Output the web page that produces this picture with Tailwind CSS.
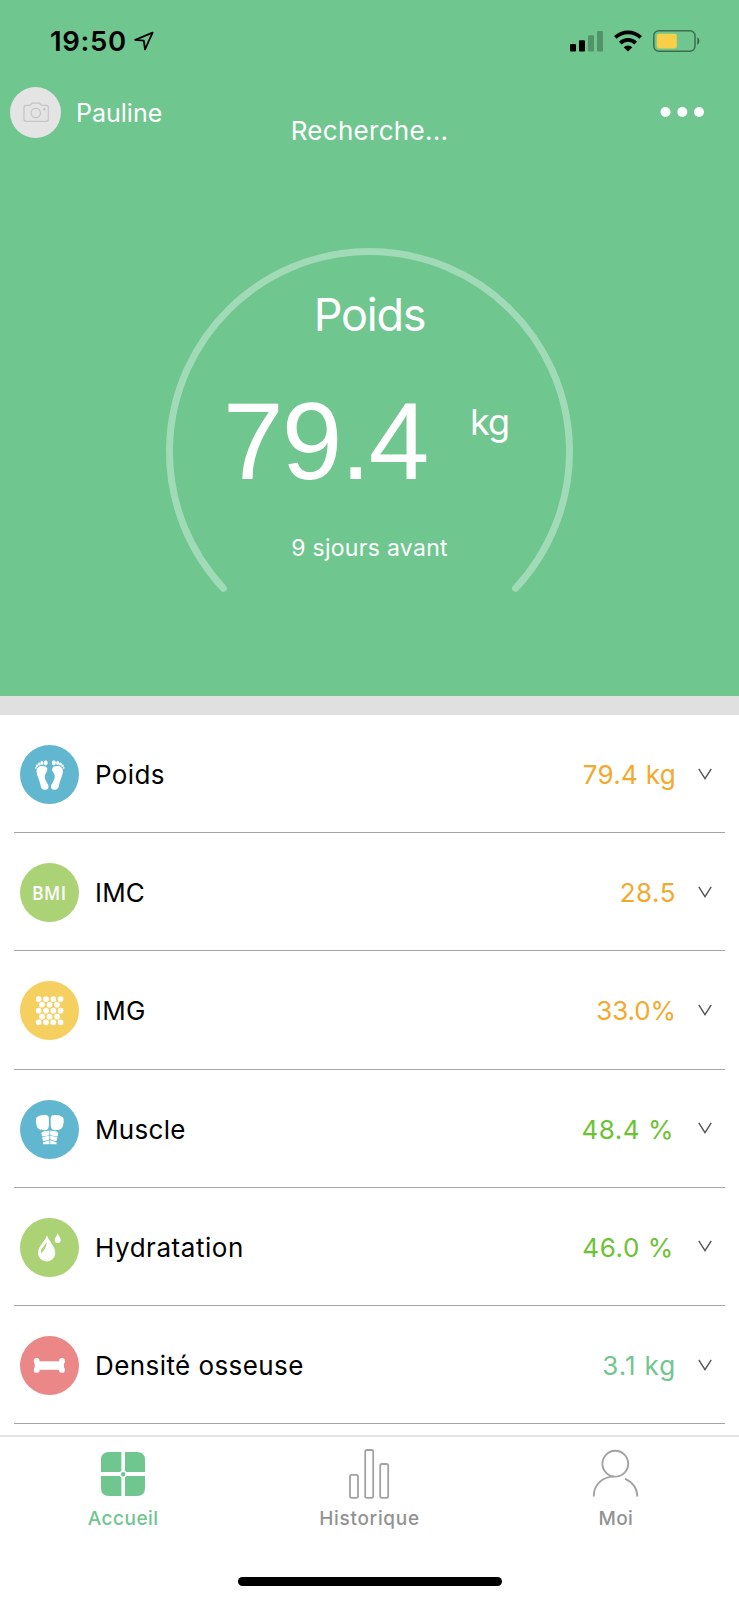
<!DOCTYPE html>
<html lang="fr">
<head>
<meta charset="utf-8">
<title>Accueil</title>
<script src="https://cdn.jsdelivr.net/npm/@tailwindcss/browser@4"></script>
</head>
<body class="bg-white">
<div class="flex h-[1600px] w-[739px] flex-col overflow-hidden bg-white font-['Inter',sans-serif] text-black">

  <header class="flex h-[696px] shrink-0 flex-col bg-[#6fc68f] text-white">
    <!-- Status bar -->
    <div class="flex h-[81px] shrink-0 items-center justify-between pl-[50px] pr-[38px] text-black">
      <div class="flex items-center">
        <span class="w-[84px] text-[27.500px] leading-[40px] font-semibold tracking-[0.700px]">19:50</span>
        <svg class="h-[20px] w-[20px]" viewBox="0 0 20 20" fill="none" stroke="currentColor" stroke-width="1.8" stroke-linejoin="round"><path d="M1.200 8.900 18.600 1.600 11 18.400 9.800 9.600Z"/></svg>
      </div>
      <div class="flex items-center">
        <svg class="mr-[11px] h-[22px] w-[33px]" viewBox="0 0 33 22"><rect x="0" y="14" width="6" height="7.5" rx="1"/><rect x="9" y="10.3" width="6" height="11.2" rx="1"/><g opacity=".25"><rect x="18" y="5.2" width="6" height="16.3" rx="1"/><rect x="27" y="1" width="6" height="20.5" rx="1"/></g></svg>
        <svg class="mr-[11px] h-[22px] w-[28px]" viewBox="0 0 28 22" fill="none" stroke="currentColor" stroke-width="3.7"><path d="M1.3 7.4a18.3 18.3 0 0 1 25.4 0"/><path d="M6.3 13.1a11 11 0 0 1 15.4 0"/><path d="M9.7 17.3a6.3 6.3 0 0 1 8.6 0L14 21.5Z" fill="currentColor" stroke="none"/></svg>
        <svg class="h-[22px] w-[48px]" viewBox="0 0 48 22"><rect x=".8" y=".8" width="41.2" height="20.4" rx="5" fill="none" stroke="#000" stroke-opacity=".45" stroke-width="1.5"/><rect x="3.8" y="3.8" width="20" height="14.6" rx="2.2" fill="#f8cf46"/><path d="M44.300 7.200C47 8.500 47 13.500 44.300 14.800Z" fill="#000" fill-opacity=".5"/></svg>
      </div>
    </div>

    <!-- Navigation -->
    <div class="grid h-[81px] shrink-0 grid-cols-[270px_1fr_270px] items-start pt-[6px]">
      <div class="flex items-center pl-[10px]">
        <svg class="h-[51px] w-[51px] rounded-full bg-[#e4e4e4]" viewBox="0 0 51 51" fill="none" stroke="#c4c4c4" stroke-width="1.2"><path d="M16.500 18.300H20.200L22 16.200H29.500L31.300 18.300H36.300Q38.300 18.300 38.300 20.300V32.300Q38.300 34.300 36.300 34.300H16Q14 34.300 14 32.300V20.300Q14 18.300 16.500 18.300Z"/><circle cx="25.800" cy="26" r="4.700"/><circle cx="34.300" cy="22.300" r=".7"/></svg>
        <span class="pl-[15px] text-[25px] leading-[50px]">Pauline</span>
      </div>
      <div class="pt-[24px] text-center text-[26px] leading-[40px] whitespace-nowrap tracking-[0.300px]">Recherche...</div>
      <svg class="mt-[20px] mr-[35px] h-[10px] w-[44px] justify-self-end" viewBox="0 0 44 10" fill="#fff"><circle cx="5.500" cy="5" r="5"/><circle cx="22.300" cy="5" r="5"/><circle cx="39" cy="5" r="5"/></svg>
    </div>

    <!-- Weight gauge -->
    <div class="grid flex-1 grid-cols-1 pt-[84px]">
      <svg class="col-start-1 row-start-1 h-[352px] w-[739px]" viewBox="0 246 739 352" fill="none" stroke="#fff" stroke-opacity=".35" stroke-width="7" stroke-linecap="round"><path d="M223.500 588.300A200 200 0 1 1 515.500 588.300"/></svg>
      <div class="col-start-1 row-start-1 flex flex-col items-center pt-[39px]">
        <div class="text-[45px] leading-[60px] tracking-[-1.200px]">Poids</div>
        <div class="mt-[44px] flex h-[106px] w-full pl-[223px]">
          <span class="w-[247px] font-['Liberation_Sans',sans-serif] text-[109px] leading-[104px] tracking-[-1.900px]">79.4</span>
          <span class="pt-[15px] text-[36px] leading-[36px] tracking-[-1px]">kg</span>
        </div>
        <div class="mt-[38px] text-[23px] leading-[30px] tracking-[0.300px]">9 sjours avant</div>
      </div>
    </div>
  </header>

  <div class="h-[19px] shrink-0 bg-[#e0e0e0]"></div>

  <!-- Measurements -->
  <main class="flex h-[720px] shrink-0 flex-col overflow-hidden text-[26px]">
    <div class="mx-[14px] flex h-[118.200px] shrink-0 items-center border-b border-[#a6a6a6] pt-[2px] pl-[6px] pr-[13px]">
      <svg class="mr-[16px] h-[59px] w-[59px]" viewBox="0 0 59 59"><circle cx="29.500" cy="29.500" r="29.500" fill="#61b7cf"/>
        <g id="foot" fill="#fff"><ellipse cx="25.700" cy="17.800" rx="2" ry="2.600"/><ellipse cx="21.900" cy="17.900" rx="1.500" ry="2"/><circle cx="19.100" cy="19" r="1.500"/><circle cx="17" cy="20.700" r="1.200"/><circle cx="15.800" cy="22.800" r=".9"/><path d="M16.500 26.500C16.300 22 20.500 20.200 24 21.300C27.500 22 28.300 24.500 26.500 27C23 32 25.500 35 28 39.500C29.500 43 27.500 44.800 25 44.800C22 44.800 21 43 20.600 40.500C19.800 35 16.800 31 16.500 26.500Z"/></g>
        <use href="#foot" transform="matrix(-1 0 0 1 59.500 0)"/></svg>
      <span class="flex-1 tracking-[0.400px]">Poids</span>
      <span class="tracking-[0.300px] text-[#f2a92c]">79.4 kg</span>
      <svg class="mb-[2px] ml-[22px] h-[12px] w-[14px]" viewBox="0 0 14 12" fill="none" stroke="#555" stroke-width="1.400"><path d="M.8 .8 7 10.600 13.200 .8"/></svg>
    </div>
    <div class="mx-[14px] flex h-[118.200px] shrink-0 items-center border-b border-[#a6a6a6] pt-[2px] pl-[6px] pr-[13px]">
      <div class="mr-[16px] flex h-[59px] w-[59px] items-center justify-center rounded-full bg-[#abd275]"><span class="scale-x-[0.900] font-['Open_Sans',sans-serif] text-[19.500px] leading-none font-semibold tracking-[0.600px] text-white">BMI</span></div>
      <span class="flex-1 tracking-[0.200px]">IMC</span>
      <span class="tracking-[0.500px] text-[#f2a92c]">28.5</span>
      <svg class="mb-[2px] ml-[22px] h-[12px] w-[14px]" viewBox="0 0 14 12" fill="none" stroke="#555" stroke-width="1.400"><path d="M.8 .8 7 10.600 13.200 .8"/></svg>
    </div>
    <div class="mx-[14px] flex h-[118.200px] shrink-0 items-center border-b border-[#a6a6a6] pt-[2px] pl-[6px] pr-[13px]">
      <svg class="mr-[16px] h-[59px] w-[59px]" viewBox="0 0 59 59"><circle cx="29.500" cy="29.500" r="29.500" fill="#f5cf60"/>
        <g fill="none" stroke="#fff" stroke-width="5.700" stroke-linecap="round"><path stroke-dasharray="0 7.300" d="M18.700 18H40.700M18.700 29.700H40.700M18.700 41.300H40.700"/><path stroke-dasharray="0 7.500" d="M22 23.700H37.100M22 35.700H37.100"/></g></svg>
      <span class="flex-1 tracking-[0.300px]">IMG</span>
      <span class="tracking-[-0.100px] text-[#f2a92c]">33.0%</span>
      <svg class="mb-[2px] ml-[22px] h-[12px] w-[14px]" viewBox="0 0 14 12" fill="none" stroke="#555" stroke-width="1.400"><path d="M.8 .8 7 10.600 13.200 .8"/></svg>
    </div>
    <div class="mx-[14px] flex h-[118.200px] shrink-0 items-center border-b border-[#a6a6a6] pt-[2px] pl-[6px] pr-[13px]">
      <svg class="mr-[16px] h-[59px] w-[59px]" viewBox="0 0 59 59"><circle cx="29.500" cy="29.500" r="29.500" fill="#61b7cf"/>
        <g id="torso" fill="#fff"><path d="M16 19C16.300 16.500 20 15 25.500 15Q28.900 15 28.900 18.500V25C28.900 28.500 27.500 30.200 24.500 30.200C20 30.200 16.800 28.500 16.500 25Q15.500 22 16 19Z"/><path d="M21.300 33C22 31.200 26 31.200 29.400 30.500V34.700C27 36 24 36.800 22 36.300Z"/><path d="M22 37.400C24 37.100 27 36.400 29.400 35.600V39.300C27 40.600 24.500 41.300 23 40.900Z"/><path d="M23.200 42C25.500 41.800 27.500 41 29.400 40.300V44.300H23Z"/></g>
        <use href="#torso" transform="matrix(-1 0 0 1 59.600 0)"/></svg>
      <span class="flex-1 tracking-[0.300px]">Muscle</span>
      <span class="pr-[2px] tracking-[0.500px] text-[#6cc233]">48.4 %</span>
      <svg class="mb-[2px] ml-[22px] h-[12px] w-[14px]" viewBox="0 0 14 12" fill="none" stroke="#555" stroke-width="1.400"><path d="M.8 .8 7 10.600 13.200 .8"/></svg>
    </div>
    <div class="mx-[14px] flex h-[118.200px] shrink-0 items-center border-b border-[#a6a6a6] pt-[2px] pl-[6px] pr-[13px]">
      <svg class="mr-[16px] h-[59px] w-[59px]" viewBox="0 0 59 59"><circle cx="29.500" cy="29.500" r="29.500" fill="#abd275"/><path fill="#fff" d="M27 17.300C29 23.500 35.300 28.500 35.300 35A8.650 8.500 0 0 1 18 35C18 28.500 25 23.500 27 17.300ZM37.700 15.300C38.300 18 40.700 19.500 40.700 22A3 3 0 0 1 34.700 22C34.700 19.500 37 18 37.700 15.300Z"/><path fill="#abd275" d="M26.700 24C24.500 28.500 20.800 30 20.900 34.200Q21.300 35.600 22.300 34.500C24 32 26.500 29.500 26.700 24Z"/></svg>
      <span class="flex-1 tracking-[0.550px]">Hydratation</span>
      <span class="pr-[2px] tracking-[0.600px] text-[#6cc233]">46.0 %</span>
      <svg class="mb-[2px] ml-[22px] h-[12px] w-[14px]" viewBox="0 0 14 12" fill="none" stroke="#555" stroke-width="1.400"><path d="M.8 .8 7 10.600 13.200 .8"/></svg>
    </div>
    <div class="mx-[14px] flex h-[118.200px] shrink-0 items-center border-b border-[#a6a6a6] pt-[2px] pl-[6px] pr-[13px]">
      <svg class="mr-[16px] h-[59px] w-[59px]" viewBox="0 0 59 59"><circle cx="29.500" cy="29.500" r="29.500" fill="#eb8787"/><g fill="#fff"><rect x="17" y="25.300" width="25" height="8.500"/><circle cx="16.700" cy="25" r="2.900"/><circle cx="16.700" cy="33.900" r="2.900"/><circle cx="42" cy="25" r="2.900"/><circle cx="42" cy="33.900" r="2.900"/><path d="M13.800 25.300h5v8.300h-5q2.200-4 0-8.300ZM44.900 25.300h-5v8.300h5q-2.200-4 0-8.300Z"/></g></svg>
      <span class="flex-1 tracking-[0.420px]">Densité osseuse</span>
      <span class="tracking-[0.900px] text-[#6fc68f]">3.1 kg</span>
      <svg class="mb-[2px] ml-[22px] h-[12px] w-[14px]" viewBox="0 0 14 12" fill="none" stroke="#555" stroke-width="1.400"><path d="M.8 .8 7 10.600 13.200 .8"/></svg>
    </div>
  </main>

  <!-- Tab bar -->
  <nav class="flex h-[165px] shrink-0 flex-col items-center border-t-2 border-[#e3e3e3] bg-white text-[19px] leading-[26px] font-medium text-[#929292]">
    <div class="grid h-[140px] w-full grid-cols-3 pt-[10px]">
      <div class="flex flex-col items-center text-[#6fc68f]">
        <svg class="h-[54px] w-[54px]" viewBox="96 1447 54 54" fill="currentColor"><path d="M101 1472V1460Q101 1452 109 1452H121.400V1472ZM125 1472V1452H137Q145 1452 145 1460V1472ZM101 1476H121.400V1496H109Q101 1496 101 1488ZM125 1476H145V1488Q145 1496 137 1496H125Z"/><circle cx="123.200" cy="1474.200" r="2.900" stroke="#fff" stroke-width="1.400"/></svg>
        <span class="mt-[5px] tracking-[0.500px]">Accueil</span>
      </div>
      <div class="flex flex-col items-center">
        <svg class="h-[54px] w-[54px]" viewBox="342 1447 54 54" fill="none" stroke="#a2a2a2" stroke-width="1.800"><rect x="350" y="1474.800" width="8" height="23" rx="1.800"/><rect x="365.200" y="1450" width="8" height="47.800" rx="1.800"/><rect x="380.200" y="1464" width="8" height="33.800" rx="1.800"/></svg>
        <span class="mt-[5px] tracking-[0.700px]">Historique</span>
      </div>
      <div class="flex flex-col items-center">
        <svg class="h-[54px] w-[54px]" viewBox="589 1447 54 54" fill="none" stroke="#a2a2a2" stroke-width="1.900"><circle cx="615.300" cy="1463.700" r="12.900"/><path d="M593.700 1496.500C593.700 1484 603 1476.600 614 1476.600M625 1478.600C633 1482.500 637.300 1489 637.300 1496.500"/></svg>
        <span class="mt-[5px] tracking-[0.300px]">Moi</span>
      </div>
    </div>
    <div class="h-[8.500px] w-[264px] rounded-full bg-black"></div>
  </nav>
</div>
</body>
</html>
